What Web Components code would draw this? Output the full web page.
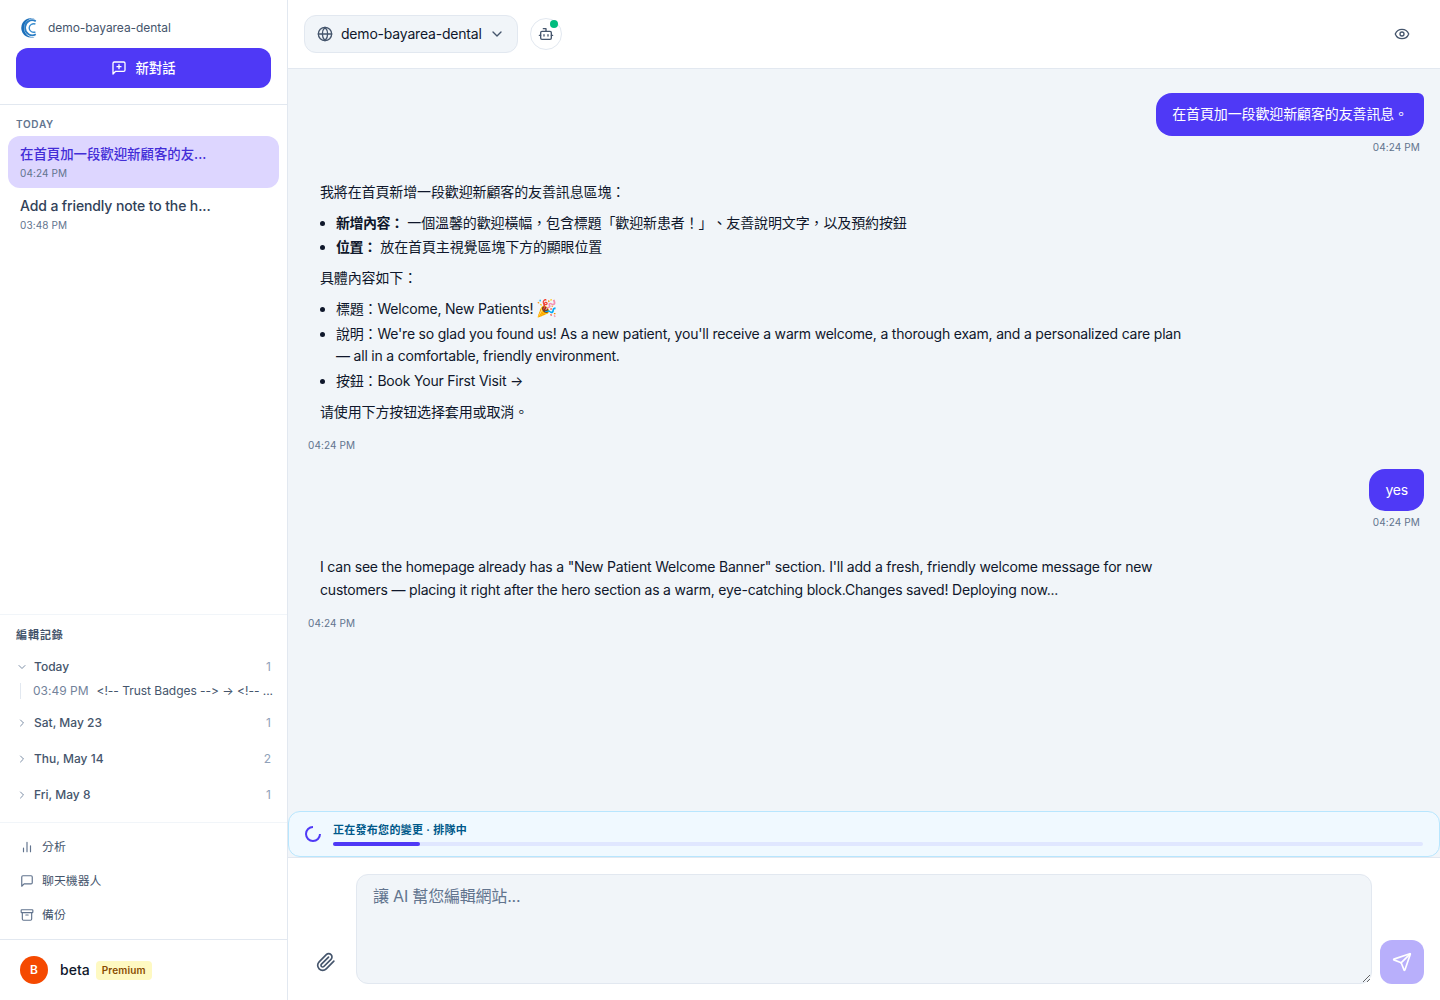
<!DOCTYPE html>
<html lang="zh-Hant">
<head>
<meta charset="utf-8">
<title>demo-bayarea-dental</title>
<style>
  html, body { margin: 0; height: 100%; }
  body {
    font-family: Inter, "Noto Sans CJK TC", sans-serif;
    font-size: 14px;
    font-feature-settings: "calt" 0;
    text-spacing-trim: space-all;
    color: #0f172b;
    --primary: #4f39f6;
    --line: #e2e8f0;
    --soft: #f1f5f9;
    --muted: #62748e;
    --slate: #45556c;
  }
</style>
</head>
<body>
<chat-app></chat-app>

<script>
const ICONS = {
  newchat: '<path d="M21 15a2 2 0 0 1-2 2H7l-4 4V5a2 2 0 0 1 2-2h14a2 2 0 0 1 2 2z"/><path d="M12 7v6M9 10h6"/>',
  down: '<path d="m6 9 6 6 6-6"/>',
  right: '<path d="m9 18 6-6-6-6"/>',
  chart: '<path d="M6 20v-6M12 20V4M18 20V10"/>',
  chat: '<path d="M21 15a2 2 0 0 1-2 2H7l-4 4V5a2 2 0 0 1 2-2h14a2 2 0 0 1 2 2z"/>',
  archive: '<rect width="20" height="5" x="2" y="3" rx="1"/><path d="M4 8v11a2 2 0 0 0 2 2h12a2 2 0 0 0 2-2V8M10 12h4"/>',
  globe: '<circle cx="12" cy="12" r="10"/><path d="M12 2a14.5 14.5 0 0 0 0 20 14.5 14.5 0 0 0 0-20M2 12h20"/>',
  bot: '<path d="M12 8V4H8"/><rect width="16" height="12" x="4" y="8" rx="2"/><path d="M2 14h2M20 14h2M15 13v2M9 13v2"/>',
  eye: '<path d="M2.062 12.348a1 1 0 0 1 0-.696 10.75 10.75 0 0 1 19.876 0 1 1 0 0 1 0 .696 10.75 10.75 0 0 1-19.876 0"/><circle cx="12" cy="12" r="3"/>',
  clip: '<path d="m21.44 11.05-9.19 9.19a6 6 0 0 1-8.49-8.49l8.57-8.57A4 4 0 1 1 18 8.84l-8.59 8.57a2 2 0 0 1-2.83-2.83l8.49-8.48"/>',
  send: '<path d="M14.536 21.686a.5.5 0 0 0 .937-.024l6.5-19a.496.496 0 0 0-.635-.635l-19 6.5a.5.5 0 0 0-.024.937l7.93 3.18a2 2 0 0 1 1.112 1.11z"/><path d="m21.854 2.147-10.94 10.939"/>'
};

class UiIcon extends HTMLElement {
  connectedCallback() {
    const size = this.getAttribute('size') || 16;
    const stroke = this.getAttribute('stroke') || 2;
    this.attachShadow({ mode: 'open' });
    this.shadowRoot.innerHTML = `
      <style>
        :host { display: block; flex: none; width: ${size}px; height: ${size}px; }
        svg { display: block; }
      </style>
      <svg width="${size}" height="${size}" viewBox="0 0 24 24" fill="none" stroke="currentColor"
        stroke-width="${stroke}" stroke-linecap="round" stroke-linejoin="round">${ICONS[this.getAttribute('name')]}</svg>
    `;
  }
}

class BrandLogo extends HTMLElement {
  connectedCallback() {
    this.attachShadow({ mode: 'open' });
    this.shadowRoot.innerHTML = `
      <style>:host { display: block; width: 20px; height: 20px; } svg { display: block; }</style>
      <svg width="20" height="20" viewBox="0 0 20 20">
        <path fill="#1c6fba" d="M15.6 1.4A9.7 9.7 0 1 0 15.6 18.4A8.3 8.6 0 0 1 4.2 10A8.3 8.6 0 0 1 15.6 1.4Z"/>
        <path fill="none" stroke="#2a7dc4" stroke-width="1.8" d="M15.8 3.3A7 6.9 0 0 0 5.2 10A7 6.9 0 0 0 15.8 16.3"/>
        <path fill="none" stroke="#3a8dcf" stroke-width="1.4" d="M15.4 6A4.6 4.2 0 0 0 9.2 10A4.6 4.2 0 0 0 15.4 14"/>
      </svg>
    `;
  }
}

class ThreadItem extends HTMLElement {
  connectedCallback() {
    this.attachShadow({ mode: 'open' });
    this.shadowRoot.innerHTML = `
      <style>
        :host { display: flex; flex-direction: column; box-sizing: border-box; height: 52px; padding: 8px 12px; border-radius: 12px; color: #314158; }
        :host([active]) { background: #ddd6ff; color: #432dd7; }
        .title { font-size: 14px; font-weight: 500; line-height: 20px; letter-spacing: -.12px; white-space: nowrap; }
        :host([active]) .title { font-size: 13.4px; letter-spacing: 0; }
        .time { font-size: 10px; line-height: 15px; margin-top: 2px; letter-spacing: .12px; color: var(--muted); }
      </style>
      <div class="title"><slot></slot></div>
      <div class="time">${this.getAttribute('time')}</div>
    `;
  }
}

class HistoryGroup extends HTMLElement {
  connectedCallback() {
    const open = this.hasAttribute('open');
    this.attachShadow({ mode: 'open' });
    this.shadowRoot.innerHTML = `
      <style>
        :host { display: block; padding-bottom: 8px; }
        .row { display: flex; align-items: center; height: 28px; padding: 0 16px; font-size: 12px; color: var(--slate); }
        .name { font-weight: 500; margin-left: 6px; flex: 1; }
        span { padding-bottom: 2px; }
        .count { color: #90a1b9; }
        ui-icon { color: #7c8ea6; }
        .body { padding: 2px 14px 2px 20px; }
      </style>
      <div class="row">
        <ui-icon name="${open ? 'down' : 'right'}" size="12"></ui-icon>
        <span class="name">${this.getAttribute('label')}</span>
        <span class="count">${this.getAttribute('count')}</span>
      </div>
      ${open ? '<div class="body"><slot></slot></div>' : ''}
    `;
  }
}

class HistoryEntry extends HTMLElement {
  connectedCallback() {
    this.attachShadow({ mode: 'open' });
    this.shadowRoot.innerHTML = `
      <style>
        :host { display: flex; gap: 8px; height: 16px; padding-left: 12px; border-left: 1px solid var(--line); font-size: 12px; line-height: 16px; color: var(--slate); white-space: nowrap; }
        .time { color: #73839b; }
        .text { letter-spacing: -.03px; }
      </style>
      <span class="time">${this.getAttribute('time')}</span>
      <span class="text"><slot></slot></span>
    `;
  }
}

class NavLink extends HTMLElement {
  connectedCallback() {
    this.attachShadow({ mode: 'open' });
    this.shadowRoot.innerHTML = `
      <style>
        :host { display: flex; align-items: center; gap: 8px; height: 34px; padding: 0 20px; font-size: 11.9px; color: var(--slate); }
        ui-icon { color: var(--muted); }
        span { padding-bottom: 3px; }
      </style>
      <ui-icon name="${this.getAttribute('icon')}" size="14"></ui-icon>
      <span><slot></slot></span>
    `;
  }
}

class ChatSidebar extends HTMLElement {
  connectedCallback() {
    this.attachShadow({ mode: 'open' });
    this.shadowRoot.innerHTML = `
      <style>
        :host { display: flex; flex-direction: column; box-sizing: border-box; width: 288px; flex: none; border-right: 1px solid var(--line); background: #fff; }
        .top { padding: 16px; border-bottom: 1px solid var(--line); }
        .site { display: flex; align-items: center; gap: 8px; height: 24px; padding: 0 4px; margin-bottom: 8px; font-size: 12px; letter-spacing: -.05px; color: var(--slate); }
        .site span { padding-bottom: 2px; }
        .new { display: flex; align-items: center; justify-content: center; gap: 8px; width: 100%; height: 40px; border: 0; padding: 0; border-radius: 12px; background: var(--primary); color: #fff; font: inherit; font-size: 13.4px; font-weight: 500; }
        .new span { padding-bottom: 2px; }
        .threads { flex: 1; padding: 12px 8px 0; }
        h3 { margin: 0 0 4px; padding: 0 8px; font-size: 10px; line-height: 15px; font-weight: 600; letter-spacing: .7px; color: var(--muted); }
        .history { height: 207px; border-top: 1px solid var(--soft); }
        h4 { margin: 0; padding: 12px 16px 10px; height: 16px; font-size: 11px; line-height: 16px; font-weight: 600; letter-spacing: .95px; color: var(--slate); }
        nav { padding: 7px 0; border-top: 1px solid var(--soft); }
        .user { display: flex; align-items: center; box-sizing: border-box; height: 61px; padding: 0 20px; border-top: 1px solid var(--line); }
        .avatar { width: 28px; height: 28px; border-radius: 50%; background: #f54900; color: #fff; font-size: 12px; font-weight: 600; line-height: 28px; text-align: center; }
        .name { margin: 0 6px 0 12px; padding-bottom: 1px; font-weight: 500; }
        .plan { height: 19px; line-height: 19px; padding: 0 6px; border-radius: 4px; background: #fef9c2; color: #894b00; font-size: 10px; font-weight: 600; letter-spacing: .18px; }
      </style>
      <div class="top">
        <div class="site"><brand-logo></brand-logo><span>demo-bayarea-dental</span></div>
        <button class="new"><ui-icon name="newchat" size="16"></ui-icon><span>新對話</span></button>
      </div>
      <div class="threads">
        <h3>TODAY</h3>
        <thread-item active time="04:24 PM">在首頁加一段歡迎新顧客的友...</thread-item>
        <thread-item time="03:48 PM">Add a friendly note to the h...</thread-item>
      </div>
      <div class="history">
        <h4>編輯記錄</h4>
        <history-group open label="Today" count="1">
          <history-entry time="03:49 PM">&lt;!-- Trust Badges --&gt; → &lt;!-- ...</history-entry>
        </history-group>
        <history-group label="Sat, May 23" count="1"></history-group>
        <history-group label="Thu, May 14" count="2"></history-group>
        <history-group label="Fri, May 8" count="1"></history-group>
      </div>
      <nav>
        <nav-link icon="chart">分析</nav-link>
        <nav-link icon="chat">聊天機器人</nav-link>
        <nav-link icon="archive">備份</nav-link>
      </nav>
      <div class="user">
        <span class="avatar">B</span><span class="name">beta</span><span class="plan">Premium</span>
      </div>
    `;
  }
}

class ChatHeader extends HTMLElement {
  connectedCallback() {
    this.attachShadow({ mode: 'open' });
    this.shadowRoot.innerHTML = `
      <style>
        :host { display: flex; align-items: center; gap: 12px; box-sizing: border-box; height: 69px; flex: none; padding: 0 30px 0 16px; border-bottom: 1px solid var(--line); background: #fff; color: var(--slate); }
        .picker { display: flex; align-items: center; gap: 8px; box-sizing: border-box; width: 214px; height: 38px; padding: 0 12px; border: 1px solid var(--line); border-radius: 12px; background: var(--soft); }
        .picker span { width: 140px; padding-bottom: 1px; color: #0f172b; letter-spacing: -.2px; white-space: nowrap; }
        .bot { position: relative; display: grid; place-items: center; box-sizing: border-box; width: 32px; height: 32px; border: 1px solid var(--line); border-radius: 50%; }
        .bot i { position: absolute; top: 1px; right: 3px; width: 8px; height: 8px; border-radius: 50%; background: #00bc7d; }
        .eye { margin-left: auto; }
      </style>
      <div class="picker"><ui-icon name="globe" size="16"></ui-icon><span>demo-bayarea-dental</span><ui-icon name="down" size="16"></ui-icon></div>
      <div class="bot"><ui-icon name="bot" size="16"></ui-icon><i></i></div>
      <ui-icon class="eye" name="eye" size="16"></ui-icon>
    `;
  }
}

class ChatMessage extends HTMLElement {
  connectedCallback() {
    this.attachShadow({ mode: 'open' });
    this.shadowRoot.innerHTML = `
      <style>
        :host { display: flex; flex-direction: column; align-items: flex-start; }
        :host([mine]) { align-items: flex-end; }
        .bubble { max-width: 870px; padding: 10px 16px; line-height: 22.75px; letter-spacing: -.2px; }
        :host([mine]) .bubble { background: var(--primary); color: #fff; border-radius: 16px 6px 16px 16px; }
        .time { margin-top: 4px; padding: 0 4px; font-size: 10px; line-height: 15px; letter-spacing: .12px; color: var(--muted); }
        ::slotted(p) { margin: 0 0 8px; }
        ::slotted(p:last-child) { margin-bottom: 0; }
        ::slotted(ul) { margin: 0 0 8px; padding-left: 16px; }
      </style>
      <div class="bubble"><slot></slot></div>
      <div class="time">${this.getAttribute('time')}</div>
    `;
  }
}

class ChatThread extends HTMLElement {
  connectedCallback() {
    this.attachShadow({ mode: 'open' });
    this.shadowRoot.innerHTML = `
      <style>
        :host { display: flex; flex-direction: column; gap: 16px; flex: 1; min-height: 0; overflow: hidden; box-sizing: border-box; padding: 24px 16px 0; }
        li + li { margin-top: 2px; }
        .cjk { letter-spacing: -.13px; }
        strong { font-weight: 600; letter-spacing: -.5px; }
        .emoji { font-size: 17px; line-height: 0; margin-left: -1px; }
      </style>
      <chat-message mine time="04:24 PM"><span class="cjk">在首頁加一段歡迎新顧客的友善訊息。</span></chat-message>
      <chat-message time="04:24 PM">
        <p class="cjk">我將在首頁新增一段歡迎新顧客的友善訊息區塊：</p>
        <ul class="cjk">
          <li><strong>新增內容：</strong> 一個溫馨的歡迎橫幅，包含標題「歡迎新患者！」、友善說明文字，以及預約按鈕</li>
          <li><strong>位置：</strong> 放在首頁主視覺區塊下方的顯眼位置</li>
        </ul>
        <p class="cjk">具體內容如下：</p>
        <ul>
          <li>標題：Welcome, New Patients! <span class="emoji">🎉</span></li>
          <li>說明：We're so glad you found us! As a new patient, you'll receive a warm welcome, a thorough exam, and a personalized care plan — all in a comfortable, friendly environment.</li>
          <li>按鈕：Book Your First Visit →</li>
        </ul>
        <p class="cjk">请使用下方按钮选择套用或取消。</p>
      </chat-message>
      <chat-message mine time="04:24 PM">yes</chat-message>
      <chat-message time="04:24 PM">I can see the homepage already has a "New Patient Welcome Banner" section. I'll add a fresh, friendly welcome message for new customers — placing it right after the hero section as a warm, eye-catching block.Changes saved! Deploying now...</chat-message>
    `;
  }
}

class DeployStatus extends HTMLElement {
  connectedCallback() {
    this.attachShadow({ mode: 'open' });
    this.shadowRoot.innerHTML = `
      <style>
        :host { display: flex; align-items: center; gap: 12px; box-sizing: border-box; height: 46px; flex: none; padding: 0 16px; border: 1px solid #b8e6fe; border-radius: 12px; background: #f0f9ff; }
        svg { display: block; flex: none; }
        .info { flex: 1; }
        .label { font-size: 11px; line-height: 16px; font-weight: 600; letter-spacing: .28px; color: #00598a; }
        .bar { height: 4px; margin-top: 4px; border-radius: 2px; background: #e0e7ff; }
        .bar i { display: block; width: 8%; height: 4px; border-radius: 2px; background: var(--primary); }
      </style>
      <svg width="16" height="16" viewBox="0 0 16 16" fill="none" stroke="#4f39f6" stroke-width="2">
        <path d="M15 8A7 7 0 0 1 8 15A7 7 0 0 1 8 1"/>
      </svg>
      <div class="info">
        <div class="label">正在發布您的變更 · 排隊中</div>
        <div class="bar"><i></i></div>
      </div>
    `;
  }
}

class ChatComposer extends HTMLElement {
  connectedCallback() {
    this.attachShadow({ mode: 'open' });
    this.shadowRoot.innerHTML = `
      <style>
        :host { display: flex; align-items: flex-end; gap: 8px; box-sizing: border-box; height: 143px; flex: none; padding: 16px; border-top: 1px solid var(--line); background: #fff; }
        .clip { display: grid; place-items: center; width: 44px; height: 44px; color: var(--slate); }
        textarea { display: block; box-sizing: border-box; flex: 1; height: 110px; margin: 0; padding: 9px 16px; border: 1px solid var(--line); border-radius: 12px; background: var(--soft); font: inherit; font-size: 16px; line-height: 24px; letter-spacing: -.2px; resize: vertical; outline: 0; }
        textarea::placeholder { color: var(--muted); }
        .send { display: grid; place-items: center; width: 44px; height: 44px; border-radius: 12px; background: var(--primary); color: #fff; opacity: .4; }
      </style>
      <div class="clip"><ui-icon name="clip" size="20"></ui-icon></div>
      <textarea placeholder="讓 AI 幫您編輯網站..."></textarea>
      <div class="send"><ui-icon name="send" size="20"></ui-icon></div>
    `;
  }
}

class ChatApp extends HTMLElement {
  connectedCallback() {
    this.attachShadow({ mode: 'open' });
    this.shadowRoot.innerHTML = `
      <style>
        :host { display: flex; height: 100vh; overflow: hidden; background: var(--soft); }
        main { flex: 1; min-width: 0; display: flex; flex-direction: column; }
      </style>
      <chat-sidebar></chat-sidebar>
      <main>
        <chat-header></chat-header>
        <chat-thread></chat-thread>
        <deploy-status></deploy-status>
        <chat-composer></chat-composer>
      </main>
    `;
  }
}

customElements.define('ui-icon', UiIcon);
customElements.define('brand-logo', BrandLogo);
customElements.define('thread-item', ThreadItem);
customElements.define('history-group', HistoryGroup);
customElements.define('history-entry', HistoryEntry);
customElements.define('nav-link', NavLink);
customElements.define('chat-sidebar', ChatSidebar);
customElements.define('chat-header', ChatHeader);
customElements.define('chat-message', ChatMessage);
customElements.define('chat-thread', ChatThread);
customElements.define('deploy-status', DeployStatus);
customElements.define('chat-composer', ChatComposer);
customElements.define('chat-app', ChatApp);
</script>
</body>
</html>
